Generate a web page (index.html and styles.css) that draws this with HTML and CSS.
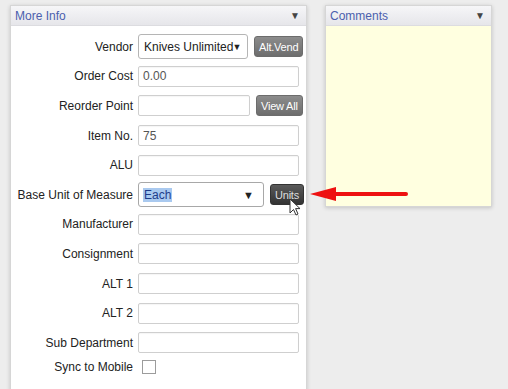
FILE: index.html
```html
<!DOCTYPE html>
<html lang="en">
<head>
  <meta charset="UTF-8" />
  <title>Item Details</title>
  <link rel="stylesheet" href="styles.css">
</head>
<body>
  <div class="page">
    <div class="panel info-panel">
      <div class="panel-head">
        <span class="panel-title">More Info</span>
        <span class="panel-toggle">&#9660;</span>
      </div>
      <div class="form">
        <label>Vendor</label>
        <div class="field">
          <div class="select vendor-select">Knives Unlimited<span class="caret-small">&#9660;</span></div>
          <button class="btn">Alt.Vend</button>
        </div>

        <label>Order Cost</label>
        <div class="field"><input class="text" type="text" value="0.00"></div>

        <label>Reorder Point</label>
        <div class="field">
          <input class="text short" type="text">
          <button class="btn">View All</button>
        </div>

        <label>Item No.</label>
        <div class="field"><input class="text" type="text" value="75"></div>

        <label>ALU</label>
        <div class="field"><input class="text" type="text"></div>

        <label>Base Unit of Measure</label>
        <div class="field">
          <div class="select unit-select"><span class="selected">Each</span><span class="caret">&#9660;</span></div>
          <button class="btn dark">Units</button>
        </div>

        <label>Manufacturer</label>
        <div class="field"><input class="text" type="text"></div>

        <label>Consignment</label>
        <div class="field"><input class="text" type="text"></div>

        <label>ALT 1</label>
        <div class="field"><input class="text" type="text"></div>

        <label>ALT 2</label>
        <div class="field"><input class="text" type="text"></div>

        <label>Sub Department</label>
        <div class="field"><input class="text" type="text"></div>

        <label class="last">Sync to Mobile</label>
        <div class="field last"><span class="checkbox"></span></div>
      </div>
    </div>

    <div class="panel comments-panel">
      <div class="panel-head">
        <span class="panel-title">Comments</span>
        <span class="panel-toggle">&#9660;</span>
      </div>
      <div class="comments-body"></div>
    </div>
  </div>

  <!-- annotation overlays -->
  <svg class="cursor" width="14" height="20" viewBox="0 0 14 20">
    <path d="M1 1 L1 15 L4.5 11.5 L7 17 L9 16 L6.6 10.6 L11 10.6 Z" fill="#fff" stroke="#333" stroke-width="1"/>
  </svg>
  <svg class="red-arrow" width="100" height="16" viewBox="0 0 100 16">
    <path d="M0 8 L26 1 L26 15 Z" fill="#ee1111"/>
    <line x1="24" y1="8" x2="96" y2="8" stroke="#ee1111" stroke-width="4" stroke-linecap="round"/>
  </svg>
</body>
</html>
```

FILE: styles.css
```css
body {
  margin: 0;
  background: #ededed;
  font-family: 'Liberation Sans', Arial, sans-serif;
  font-size: 12px;
  color: #222;
}
.page {
  display: flex;
  align-items: flex-start;
  gap: 18px;
  padding: 5px 0 0 10px;
}
.panel {
  background: #fff;
  border: 1px solid #d6d6d6;
  box-shadow: 0 1px 4px rgba(0,0,0,0.18);
}
.panel-head {
  display: flex;
  justify-content: space-between;
  align-items: center;
  height: 19px;
  padding: 0 6px 0 4px;
  background: linear-gradient(#f6f6f8, #e6e6ea);
  border-bottom: 1px solid #dcdce0;
}
.panel-title {
  color: #4b5fae;
  font-size: 12px;
}
.panel-toggle {
  color: #444;
  font-size: 10px;
}
.info-panel {
  width: 295px;
}
.form {
  display: grid;
  grid-template-columns: 122px 1fr;
  column-gap: 5px;
  grid-auto-rows: 29.6px;
  padding: 6px 8px 4px 0;
  align-items: center;
}
.form label {
  text-align: right;
  font-size: 12px;
}
.form .last {
  height: 24px;
  margin-top: -3px;
  align-self: start;
  display: flex;
  align-items: center;
}
.form label.last {
  justify-content: flex-end;
}
.field {
  display: flex;
  align-items: center;
  gap: 6px;
}
.text {
  box-sizing: border-box;
  width: 161px;
  height: 21px;
  margin: 0;
  padding: 0 4px;
  border: 1px solid #cfcfcf;
  border-radius: 2px;
  font-family: inherit;
  font-size: 12px;
  color: #555;
  box-shadow: inset 0 1px 1px rgba(0,0,0,0.04);
}
.text.short {
  width: 112px;
}
.select {
  box-sizing: border-box;
  display: flex;
  align-items: center;
  height: 25px;
  border: 1px solid #b5b5b5;
  border-radius: 3px;
  background: #fff;
  font-size: 12px;
  color: #222;
  padding: 0 5px;
}
.vendor-select {
  width: 110px;
  white-space: nowrap;
  overflow: hidden;
}
.caret-small {
  font-size: 9px;
  margin-left: -1px;
}
.unit-select {
  width: 126px;
  justify-content: space-between;
  border-color: #a8a8a8;
}
.selected {
  background: #a9c9ef;
  color: #1f3c8a;
  padding: 0 1px;
  margin-left: -1px;
}
.caret {
  font-size: 11px;
  margin-right: 4px;
}
.btn {
  height: 21px;
  padding: 0 4px;
  border: 1px solid #6c6c6c;
  border-radius: 3px;
  background: linear-gradient(#8c8c8c, #6d6d6d);
  color: #fff;
  font-family: inherit;
  font-size: 11px;
  letter-spacing: -0.2px;
}
.btn.dark {
  width: 34px;
  padding: 0;
  border-color: #333;
  background: linear-gradient(#5a5a5a, #333);
  color: #ddd;
}
.checkbox {
  width: 12px;
  height: 12px;
  margin-left: 4px;
  border: 1px solid #9c9c9c;
  background: #fff;
}
.comments-panel {
  width: 165px;
}
.comments-body {
  height: 180px;
  background: #ffffe0;
}
.cursor {
  position: absolute;
  left: 289px;
  top: 198px;
}
.red-arrow {
  position: absolute;
  left: 310px;
  top: 186px;
}
```
